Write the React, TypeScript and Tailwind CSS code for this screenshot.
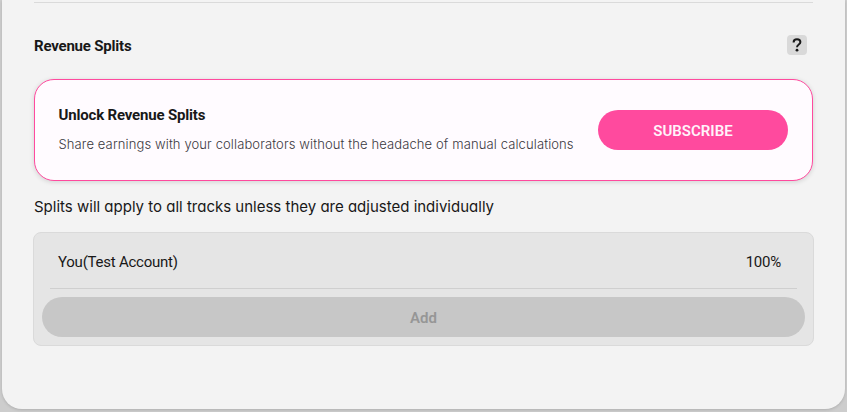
const SPLITS: { name: string; share: string }[] = [{ name: "You(Test Account)", share: "100%" }];

export default function RevenueSplits() {
  return (
    <div className="h-[412px] w-[847px] overflow-hidden bg-[#cdcdcd] px-0.5 font-['Roboto',sans-serif] text-[#181818]">
      <main className="h-[409px] rounded-b-[20px] bg-[#f3f3f3] px-8 pt-0.5 shadow-[0_1px_3px_rgba(0,0,0,0.15)]">
        <div className="h-px bg-[#dadada]" />

        <header className="mt-8 flex h-5 items-center justify-between pr-1.5">
          <h2 className="pt-0.5 text-[15px] leading-5 font-bold tracking-[-0.2px]">Revenue Splits</h2>
          <button
            aria-label="About revenue splits"
            className="flex size-5 items-center justify-center rounded bg-[#d9d9d9]"
          >
            <HelpMark />
          </button>
        </header>

        <section className="mt-6 flex h-[102px] items-center justify-between rounded-[20px] border border-[#ff4a9e] bg-[#fffbff] pr-6 pl-[23.5px] shadow-[0_1px_5px_rgba(0,0,0,0.14)]">
          <div className="whitespace-nowrap">
            <h3 className="text-[15px] leading-5 font-bold tracking-[-0.18px]">Unlock Revenue Splits</h3>
            <p className="mt-[9px] pb-px font-['Inter',sans-serif] text-[13px] leading-5 font-light tracking-[0.115px] text-[#3a383e]">
              Share earnings with your collaborators without the headache of manual calculations
            </p>
          </div>
          <button className="h-10 w-[190px] rounded-full bg-[#ff4a9e] pt-0.5 text-[15px] font-semibold text-[#fff3fa]">
            SUBSCRIBE
          </button>
        </section>

        <p className="mt-4 font-['Inter',sans-serif] text-[15px] leading-5 whitespace-nowrap [font-feature-settings:'cv11']">
          Splits will apply to all tracks unless they are adjusted individually
        </p>

        <section className="-mx-px mt-[15px] h-[114px] rounded-lg border border-[#dadada] bg-[#e5e5e5] px-2">
          {SPLITS.map((s) => (
            <div
              key={s.name}
              className="mx-2 flex h-14 items-center justify-between border-b border-[#cfcfcf] pt-[3px] pr-4 pl-2 text-[15px] tracking-[-0.24px]"
            >
              <span>{s.name}</span>
              <span>{s.share}</span>
            </div>
          ))}
          <button disabled className="mt-2 h-10 w-full rounded-full bg-[#c7c7c7] pt-0.5 text-[15px] font-semibold text-[#969696]">
            Add
          </button>
        </section>
      </main>
    </div>
  );
}

function HelpMark() {
  return (
    <svg width="20" height="20" viewBox="0 0 20 20" fill="none" aria-hidden>
      <path d="M6.6 7.4C6.6 5.3 7.9 4.3 10 4.3s3.4 1.1 3.4 2.8c0 2.5-3.4 2.3-3.4 5.1" stroke="#181818" strokeWidth="2" />
      <circle cx="10" cy="15.2" r="1.4" fill="#181818" />
    </svg>
  );
}
